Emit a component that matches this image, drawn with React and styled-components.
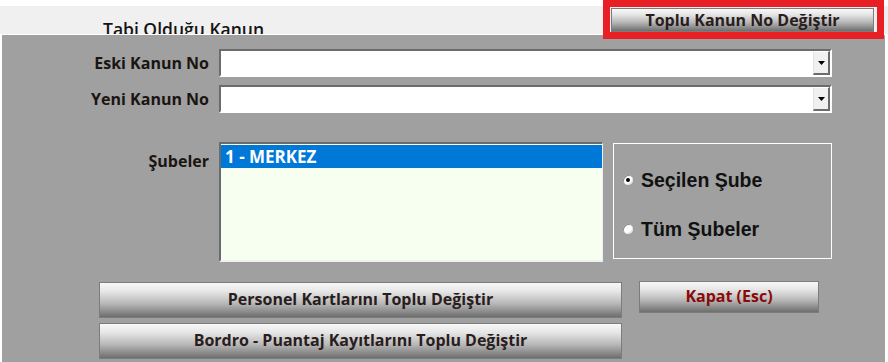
import React from "react";
import styled, { createGlobalStyle } from "styled-components";

const Global = createGlobalStyle`
  html, body { margin: 0; padding: 0; background: #ffffff; }
  body { font-family: "Open Sans", "Noto Sans", sans-serif; }
`;

const Screen = styled.div`
  position: relative;
  width: 888px;
  height: 362px;
  overflow: hidden;
  padding-top: 6px;
  box-sizing: border-box;
  display: flex;
  flex-direction: column;
`;

const TopStrip = styled.div`
  height: 28px;
  flex: none;
  background: #f0f0f0;
  overflow: hidden;
  padding-left: 103px;
  box-sizing: border-box;
`;

const Caption = styled.div`
  font-family: "Open Sans", sans-serif;
  font-weight: 600;
  font-size: 17.5px;
  color: #141414;
  line-height: 22px;
  padding-top: 12px;
`;

const Panel = styled.div`
  flex: 1;
  margin: 0 2px 0 1px;
  background: #a0a0a0;
  border: 1px solid #ffffff;
  border-bottom: none;
  padding-top: 14px;
  box-sizing: border-box;
`;

const FormGrid = styled.div`
  display: grid;
  grid-template-columns: 207px 613px;
  column-gap: 10px;
  row-gap: 8px;
  align-items: center;
`;

const Label = styled.div`
  font-family: "Open Sans", sans-serif;
  font-weight: 700;
  font-size: 16px;
  color: #1a1512;
  text-align: right;
  align-self: ${(p) => (p.$top ? "start" : "center")};
  padding-top: ${(p) => (p.$top ? "8px" : "0")};
`;

const Combo = styled.div`
  height: 28px;
  box-sizing: border-box;
  background: #ffffff;
  border-style: solid;
  border-width: 2px;
  border-color: #6b6b6b #ffffff #ffffff #6b6b6b;
  display: flex;
  justify-content: flex-end;
`;

const DropBtn = styled.div`
  width: 17px;
  box-sizing: border-box;
  background: #f0f0f0;
  border-style: solid;
  border-width: 1px 2px 2px 1px;
  border-color: #ffffff #6b6b6b #6b6b6b #e3e3e3;
  display: flex;
  align-items: center;
  justify-content: center;
`;

const ListRow = styled.div`
  display: grid;
  grid-template-columns: 207px 384px 219px;
  column-gap: 10px;
  margin-top: 29px;
`;

const ListBox = styled.div`
  height: 120px;
  box-sizing: border-box;
  background: #f7fff0;
  border-style: solid;
  border-width: 2px 1px 2px 2px;
  border-color: #6b6b6b #f0f0f0 #f0f0f0 #6b6b6b;
  padding-top: 1px;
`;

const ListItem = styled.div`
  height: 23px;
  line-height: 23px;
  padding-left: 4px;
  background: ${(p) => (p.$selected ? "#0078d7" : "transparent")};
  color: ${(p) => (p.$selected ? "#ffffff" : "#000000")};
  font-family: "Open Sans", sans-serif;
  font-weight: 700;
  font-size: 17px;
`;

const RadioBox = styled.div`
  height: 116px;
  margin-top: 1px;
  box-sizing: border-box;
  border: 1px solid #ffffff;
  display: flex;
  flex-direction: column;
  gap: 25px;
  padding-left: 9px;
  padding-top: 24px;
`;

const RadioRow = styled.label`
  display: flex;
  align-items: center;
  gap: 8px;
  height: 24px;
  font-family: "Liberation Sans", Arial, sans-serif;
  font-weight: 700;
  font-size: 19.5px;
  color: #111111;
`;

const RadioCircle = styled.span`
  width: 10px;
  height: 10px;
  border-radius: 50%;
  background: #ffffff;
  box-shadow: inset 1px 1px 0 #8a8a8a, inset -1px -1px 0 #e0e0e0;
  display: flex;
  align-items: center;
  justify-content: center;
  flex: none;
  &::after {
    content: "";
    width: 4px;
    height: 4px;
    border-radius: 50%;
    background: ${(p) => (p.$checked ? "#000" : "transparent")};
  }
`;

const ButtonRow = styled.div`
  display: flex;
  align-items: flex-start;
  margin-top: 19px;
  padding-left: 97px;
  gap: 17px;
`;

const ButtonCol = styled.div`
  display: flex;
  flex-direction: column;
  gap: 5px;
  margin-top: 1px;
`;

const GradButton = styled.button`
  width: ${(p) => p.$w}px;
  height: ${(p) => p.$h}px;
  box-sizing: border-box;
  border: 1px solid #7c7c7c;
  background: linear-gradient(#f8f8f8 0%, #e6e6e6 25%, #b8b8b8 60%, #6e6e6e 100%);
  font-family: "Open Sans", sans-serif;
  font-weight: 700;
  font-size: 16px;
  color: ${(p) => p.$color || "#2a1d1d"};
  padding: 0 0 2px;
  cursor: pointer;
`;

const Highlight = styled.div`
  position: absolute;
  left: 603px;
  top: 0;
  width: 281px;
  height: 39px;
  box-sizing: border-box;
  border: 7px solid #e81f25;
  padding: 1px 1px 0 1px;
  display: flex;
`;

const Arrow = () => (
  <svg width="7" height="4" viewBox="0 0 7 4">
    <polygon points="0,0 7,0 3.5,4" fill="#000" />
  </svg>
);

export default function App() {
  return (
    <>
      <Global />
      <Screen>
        <TopStrip>
          <Caption>Tabi Olduğu Kanun</Caption>
        </TopStrip>
        <Panel>
          <FormGrid>
            <Label>Eski Kanun No</Label>
            <Combo>
              <DropBtn>
                <Arrow />
              </DropBtn>
            </Combo>
            <Label>Yeni Kanun No</Label>
            <Combo>
              <DropBtn>
                <Arrow />
              </DropBtn>
            </Combo>
          </FormGrid>
          <ListRow>
            <Label $top>Şubeler</Label>
            <ListBox>
              <ListItem $selected>1 - MERKEZ</ListItem>
            </ListBox>
            <RadioBox>
              <RadioRow>
                <RadioCircle $checked />
                Seçilen Şube
              </RadioRow>
              <RadioRow>
                <RadioCircle />
                Tüm Şubeler
              </RadioRow>
            </RadioBox>
          </ListRow>
          <ButtonRow>
            <ButtonCol>
              <GradButton $w={523} $h={36}>Personel Kartlarını Toplu Değiştir</GradButton>
              <GradButton $w={523} $h={36}>Bordro - Puantaj Kayıtlarını Toplu Değiştir</GradButton>
            </ButtonCol>
            <GradButton $w={180} $h={32} $color="#8a0a0a">Kapat (Esc)</GradButton>
          </ButtonRow>
        </Panel>
        <Highlight>
          <GradButton $w={263} $h={24}>Toplu Kanun No Değiştir</GradButton>
        </Highlight>
      </Screen>
    </>
  );
}
